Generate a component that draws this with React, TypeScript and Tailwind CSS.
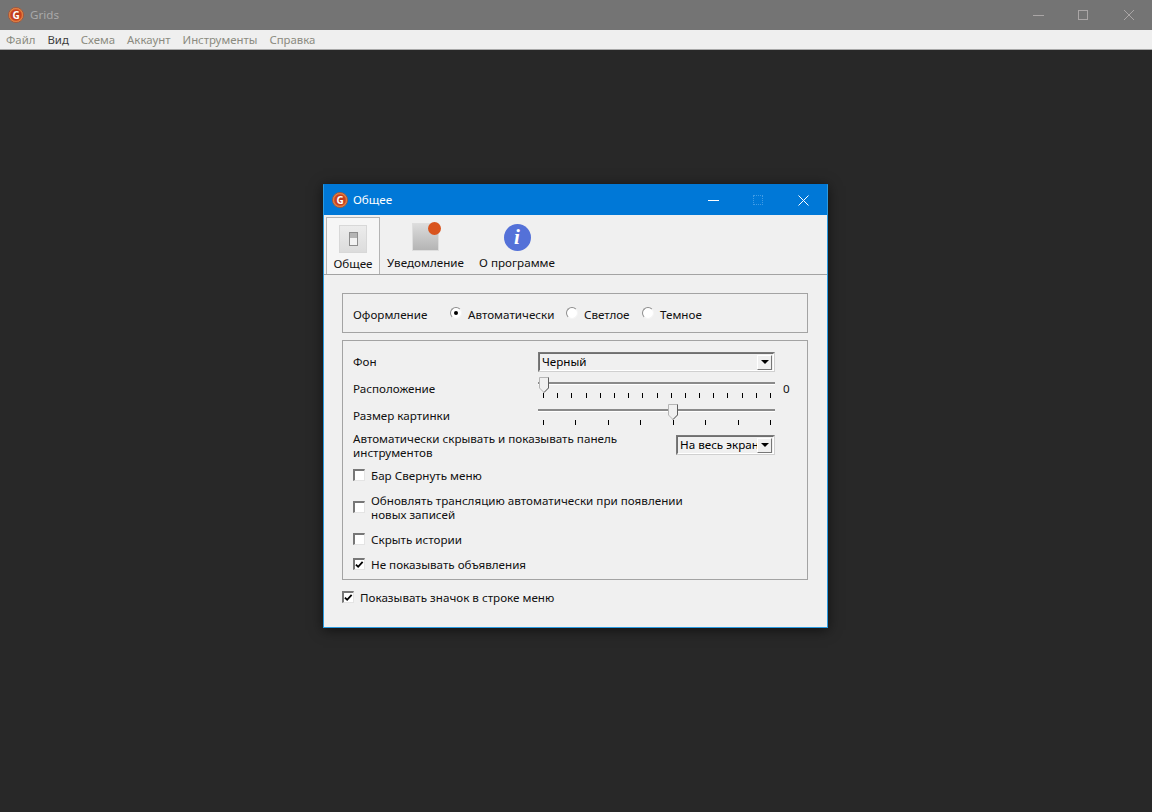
const font = "font-['Noto_Sans','DejaVu_Sans',sans-serif]";

const menuItems = ['Файл', 'Вид', 'Схема', 'Аккаунт', 'Инструменты', 'Справка'];

function Logo() {
  return (
    <div className="w-4 h-4 rounded-full border border-[#a8563a] bg-[radial-gradient(circle_at_50%_50%,#b8351c_0%,#c9421f_52%,#eda052_72%,#d9713a_100%)] flex items-center justify-center text-[10px] leading-none font-bold text-white shrink-0">
      G
    </div>
  );
}

function Sunken({ className, children }: { className: string; children: React.ReactNode }) {
  return (
    <div className={`border-2 border-t-[#6e6e6e] border-l-[#6e6e6e] border-r-[#fff] border-b-[#fff] ${className}`}>
      {children}
    </div>
  );
}

function Select({ value, className }: { value: string; className: string }) {
  return (
    <Sunken className={`bg-[#f0f0f0] flex items-center h-[20px] pl-[2px] outline-1 -outline-offset-1 outline-[#8a8a8a]/40 ${className}`}>
      <span className="flex-1 overflow-hidden whitespace-nowrap text-black">{value}</span>
      <div className="w-[15px] h-[15px] mr-[1px] bg-[#f0f0f0] border-r border-b border-[#777] border-t border-t-white border-l border-l-white flex items-center justify-center">
        <div className="w-0 h-0 border-l-[4px] border-r-[4px] border-t-[4px] border-l-transparent border-r-transparent border-t-black" />
      </div>
    </Sunken>
  );
}

function Thumb({ left }: { left: number }) {
  return (
    <svg className="absolute top-0" style={{ left }} width="11" height="16" viewBox="0 0 11 16">
      <path d="M.5.5h9v10.5l-4.5 4.5L.5 11z" fill="#f0f0f0" stroke="#b5b5b5" />
      <path d="M9.5.5v10.5l-4.5 4.5" fill="none" stroke="#5e5e5e" />
    </svg>
  );
}

function Slider({ thumb, ticks }: { thumb: number; ticks: number }) {
  return (
    <div className="relative w-[237px] h-[21px]">
      <div className="absolute left-0 right-0 top-[5px] h-[3px] bg-[#8a8a8a] border-b border-white" />
      <Thumb left={thumb} />
      <div className="absolute left-[5px] right-[4px] top-[16px] flex justify-between">
        {Array.from({ length: ticks }).map((_, i) => (
          <div key={i} className="w-px h-[5px] bg-black" />
        ))}
      </div>
    </div>
  );
}

function Radio({ checked, label }: { checked?: boolean; label: string }) {
  return (
    <div className="flex items-center">
      <div className="w-3 h-3 -mt-[3px] rounded-full bg-white border border-[#8c8c8c] border-r-[#f4f4f4] border-b-[#f4f4f4] flex items-center justify-center shrink-0">
        {checked && <div className="w-1 h-1 rounded-full bg-black" />}
      </div>
      <span className="ml-[6px]">{label}</span>
    </div>
  );
}

function Checkbox({ checked, label, className }: { checked?: boolean; label: React.ReactNode; className: string }) {
  return (
    <div className={`flex items-center ${className}`}>
      <div className="w-3 h-3 -mt-[2px] bg-white border-t-2 border-l-2 border-t-[#777] border-l-[#777] border-r border-b border-r-[#e4e4e4] border-b-[#e4e4e4] flex items-center justify-center shrink-0">
        {checked && (
          <svg width="10" height="10" viewBox="0 0 10 10">
            <path d="M1 4.5l2.5 2.5L8.5 1.5" fill="none" stroke="#000" strokeWidth="2" />
          </svg>
        )}
      </div>
      <span className="ml-[6px] leading-[14px]">{label}</span>
    </div>
  );
}

function Tab({ label, active, icon, className }: { label: string; active?: boolean; icon: React.ReactNode; className: string }) {
  return (
    <div className={`flex flex-col items-center ${active ? 'pt-[6px] border border-[#b4b4b4] border-b-0 bg-[#f6f6f6]' : 'pt-[7px]'} ${className}`}>
      <div className="h-[30px] flex items-center justify-center">{icon}</div>
      <span className={`whitespace-nowrap ${active ? 'mt-[2px]' : 'mt-[3px]'}`}>{label}</span>
    </div>
  );
}

export default function App() {
  return (
    <div className={`w-[1152px] h-[812px] overflow-hidden bg-[#282828] text-[11.65px] leading-[16px] ${font}`}>
      {/* main window chrome */}
      <div className="h-[30px] bg-[#747474] flex items-center pl-[8px]">
        <Logo />
        <span className="ml-[6px] text-[#a9a9a9]">Grids</span>
        <div className="ml-auto flex items-center text-[#aaa6a6]">
          <div className="w-[11px] h-px bg-current mr-[34px]" />
          <div className="w-[10px] h-[10px] border border-current mr-[36px]" />
          <svg className="mr-[18px]" width="10" height="10" viewBox="0 0 10 10">
            <path d="M0 0l10 10M10 0L0 10" stroke="currentColor" />
          </svg>
        </div>
      </div>
      <div className="h-[20px] bg-[#efefef] border-b border-[#a8a8a8] flex items-center pl-[6px] gap-[12px] text-[11.4px] text-[#8b8b80]">
        {menuItems.map(m => (
          <span key={m} className={m === 'Вид' ? 'text-[#3c3c3c]' : ''}>{m}</span>
        ))}
      </div>

      <div className="pt-[134px] pl-[323px]">
        {/* dialog */}
        <div className="w-[505px] h-[444px] bg-[#f0f0f0] border border-[#2a9ae0] border-t-[#0078d7] shadow-[0_2px_12px_rgba(0,0,0,0.6)] text-[#111]">
          <div className="h-[30px] bg-[#0078d7] flex items-center pl-[8px] text-white">
            <Logo />
            <span className="ml-[5px]">Общее</span>
            <div className="ml-auto flex items-center">
              <div className="w-[11px] h-px bg-white mr-[34px]" />
              <div className="w-[10px] h-[10px] border border-dotted border-[#3f9be5] mr-[35px]" />
              <svg className="mr-[18px]" width="11" height="11" viewBox="0 0 11 11">
                <path d="M.5.5l10 10M10.5.5l-10 10" stroke="#fff" />
              </svg>
            </div>
          </div>

          {/* toolbar */}
          <div className="h-[60px] border-b border-[#a3a3a3] flex items-end pl-[2px]">
            <Tab
              active
              label="Общее"
              className="w-[54px] h-[57px]"
              icon={
                <div className="w-[28px] h-[28px] bg-gradient-to-b from-[#ececec] to-[#dcdcdc] border border-[#d8d8d8] flex items-center justify-center">
                  <div className="w-[9px] h-[14px] bg-[linear-gradient(#b4b4b4_0%,#b4b4b4_45%,#f2f2f2_45%)] border border-[#8c8c8c]" />
                </div>
              }
            />
            <Tab
              label="Уведомление"
              className="w-[77px] h-[59px] ml-[7px]"
              icon={
                <div className="relative w-[27px] h-[28px] bg-gradient-to-b from-[#dcdcdc] to-[#b4b4b4] border border-[#dedede]">
                  <div className="absolute -top-[2px] -right-[3px] w-[13px] h-[13px] rounded-full bg-[#d9541e]" />
                </div>
              }
            />
            <Tab
              label="О программе"
              className="w-[76px] h-[59px] ml-[15px]"
              icon={
                <div className="w-[27px] h-[27px] rounded-full bg-[#5471d8] flex items-center justify-center text-white text-[21px] leading-none font-bold italic font-['Liberation_Serif',serif]">
                  i
                </div>
              }
            />
          </div>

          <div className="pl-[18px] pr-[19px] pt-[18px]">
            {/* appearance */}
            <div className="h-[40px] border border-[#a3a3a3] flex items-center pl-[10px] pt-[3px]">
              <span className="w-[97px]">Оформление</span>
              <div className="w-[116px]"><Radio checked label="Автоматически" /></div>
              <div className="w-[76px]"><Radio label="Светлое" /></div>
              <Radio label="Темное" />
            </div>

            {/* general options */}
            <div className="h-[240px] mt-[7px] border border-[#a3a3a3] pl-[10px] pt-[11px]">
              <div className="flex items-center h-[20px]">
                <span className="w-[185px]">Фон</span>
                <Select value="Черный" className="w-[237px]" />
              </div>
              <div className="flex mt-[5px]">
                <span className="w-[185px] pt-[4px]">Расположение</span>
                <Slider thumb={1} ticks={17} />
                <span className="ml-[8px] pt-[4px]">0</span>
              </div>
              <div className="flex mt-[6px]">
                <span className="w-[185px] pt-[4px]">Размер картинки</span>
                <Slider thumb={130} ticks={8} />
              </div>
              <div className="flex items-center h-[28px] mt-[6px] leading-[14px]">
                <span className="w-[323px] pt-[1px]">Автоматически скрывать и показывать панель инструментов</span>
                <Select value="На весь экран" className="w-[99px]" />
              </div>
              <Checkbox label="Бар Свернуть меню" className="mt-[10px] h-[14px]" />
              <Checkbox
                label={<>Обновлять трансляцию автоматически при появлении<br />новых записей</>}
                className="mt-[11px] h-[28px]"
              />
              <Checkbox label="Скрыть истории" className="mt-[11px] h-[14px]" />
              <Checkbox checked label="Не показывать объявления" className="mt-[11px] h-[14px]" />
            </div>

            <Checkbox checked label="Показывать значок в строке меню" className="mt-[11px] h-[14px]" />
          </div>
        </div>
      </div>
    </div>
  );
}
